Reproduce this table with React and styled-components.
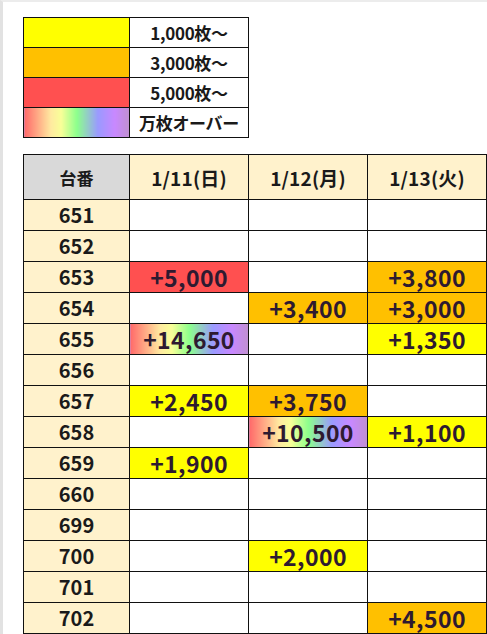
import styled, { createGlobalStyle } from "styled-components";

const GlobalStyle = createGlobalStyle`
  html, body {
    margin: 0;
    padding: 0;
    background: #ffffff;
  }
  body {
    font-family: "Noto Sans CJK JP", "Noto Sans", sans-serif;
    color: #2a1a2c;
  }
`;

const RAINBOW = 'linear-gradient(to right, #ff6a6a 0%, #ffe9a0 25%, #f8ff98 35%, #8cff8c 50%, #9a9aff 70%, #c888ff 86%, #c090d0 100%)';

const FILLS = {
    y: '#ffff00',
    o: '#ffc000',
    r: '#ff5050',
    m: RAINBOW,
    '': '#ffffff'
};

const legend = [
    { fill: 'y', label: '1,000枚～' },
    { fill: 'o', label: '3,000枚～' },
    { fill: 'r', label: '5,000枚～' },
    { fill: 'm', label: '万枚オーバー' }
];

const days = ['1/11(日)', '1/12(月)', '1/13(火)'];

const rows = [
    { no: '651', v: [['', ''], ['', ''], ['', '']] },
    { no: '652', v: [['', ''], ['', ''], ['', '']] },
    { no: '653', v: [['r', '+5,000'], ['', ''], ['o', '+3,800']] },
    { no: '654', v: [['', ''], ['o', '+3,400'], ['o', '+3,000']] },
    { no: '655', v: [['m', '+14,650'], ['', ''], ['y', '+1,350']] },
    { no: '656', v: [['', ''], ['', ''], ['', '']] },
    { no: '657', v: [['y', '+2,450'], ['o', '+3,750'], ['', '']] },
    { no: '658', v: [['', ''], ['m', '+10,500'], ['y', '+1,100']] },
    { no: '659', v: [['y', '+1,900'], ['', ''], ['', '']] },
    { no: '660', v: [['', ''], ['', ''], ['', '']] },
    { no: '699', v: [['', ''], ['', ''], ['', '']] },
    { no: '700', v: [['', ''], ['y', '+2,000'], ['', '']] },
    { no: '701', v: [['', ''], ['', ''], ['', '']] },
    { no: '702', v: [['', ''], ['', ''], ['o', '+4,500']] }
];

const App = () => {
    return (
        <Page>
            <GlobalStyle />
            <Legend>
                <tbody>
                    {legend.map((item) => (
                        <tr key={item.label}>
                            <Swatch fill={item.fill} />
                            <LegendLabel>{item.label}</LegendLabel>
                        </tr>
                    ))}
                </tbody>
            </Legend>
            <Results>
                <thead>
                    <tr>
                        <CornerHead>台番</CornerHead>
                        {days.map((d) => <DayHead key={d}>{d}</DayHead>)}
                    </tr>
                </thead>
                <tbody>
                    {rows.map((row) => (
                        <tr key={row.no}>
                            <MachineNo>{row.no}</MachineNo>
                            {row.v.map(([fill, text], i) => (
                                <Value key={i} fill={fill}>{text}</Value>
                            ))}
                        </tr>
                    ))}
                </tbody>
            </Results>
        </Page>
    );
};

const Page = styled.div`
    box-sizing: border-box;
    width: 487px;
    height: 634px;
    overflow: hidden;
    border-left: 3px solid #e2e2e2;
    border-top: 2px solid #ececec;
    padding: 15px 0 0 20px;
    display: flex;
    flex-direction: column;
    gap: 16px;
`;

const Legend = styled.table`
    border-collapse: collapse;
    table-layout: fixed;
    width: 226px;

    td {
        border: 1px solid #111;
        height: 29px;
        padding: 0;
    }
`;

const Swatch = styled.td`
    width: 105px;
    background: ${props => FILLS[props.fill]};
`;

const LegendLabel = styled.td`
    text-align: center;
    font-size: 17px;
    font-weight: 700;
    color: #1a1a1a;
    letter-spacing: -0.3px;
`;

const Results = styled.table`
    border-collapse: collapse;
    table-layout: fixed;
    width: 464px;

    th, td {
        border: 1px solid #111;
        padding: 0;
        text-align: center;
        line-height: 1;
    }
    tbody td {
        height: 30px;
    }
`;

const CornerHead = styled.th`
    width: 105px;
    height: 44px;
    background: #d9d9d9;
    font-size: 17px;
    font-weight: 700;
    color: #1a1a1a;
`;

const DayHead = styled.th`
    background: #fff2cc;
    font-size: 19px;
    font-weight: 700;
    color: #1a1a1a;
    letter-spacing: 0.2px;
`;

const MachineNo = styled.td`
    background: #fff2cc;
    font-size: 20px;
    font-weight: 700;
    color: #1a1a1a;
`;

const Value = styled.td`
    background: ${props => FILLS[props.fill]};
    font-size: 23px;
    font-weight: 700;
    color: #2e1a30;
    letter-spacing: 0.4px;
`;

export default App;
